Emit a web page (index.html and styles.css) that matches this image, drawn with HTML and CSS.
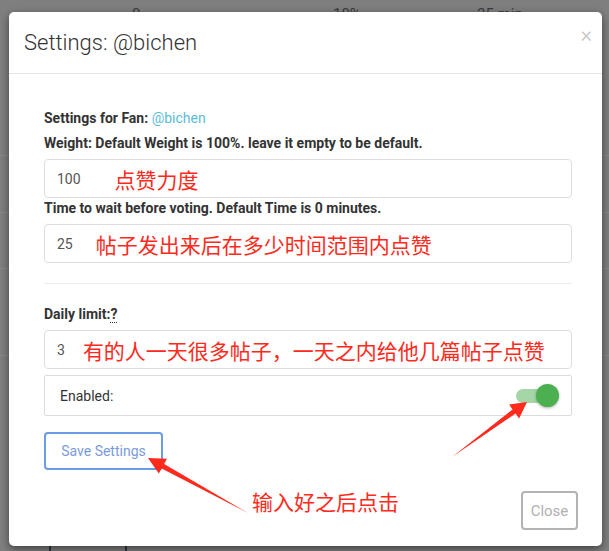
FILE: index.html
```html
<!DOCTYPE html>
<html lang="zh">
  <head>
    <meta charset="UTF-8" />
    <title>Settings: @bichen</title>
    <link rel="stylesheet" href="styles.css">
  </head>
  <body>
    <!-- page behind the dialog -->
    <div class="page">
      <div class="page-head">
        <span>0</span>
        <span>10%</span>
        <span>25 min</span>
      </div>
      <div class="page-rows">
        <div class="page-row row-a"></div>
        <div class="page-row row-b"></div>
        <div class="page-row row-c"></div>
        <div class="page-row row-last">
          <div class="page-cell cell-a"></div>
          <div class="page-cell cell-b"></div>
        </div>
      </div>
    </div>

    <div class="modal">
      <div class="modal-header">
        <h4 class="modal-title">Settings: @bichen</h4>
        <span class="close">&times;</span>
      </div>

      <div class="modal-body">
        <p class="label label-fan">Settings for Fan: <a class="fan">@bichen</a></p>
        <p class="label">Weight: Default Weight is 100%. leave it empty to be default.</p>
        <div class="field">
          <span class="value">100</span>
          <span class="note note-weight">点赞力度</span>
        </div>

        <p class="label">Time to wait before voting. Default Time is 0 minutes.</p>
        <div class="field">
          <span class="value">25</span>
          <span class="note note-time">帖子发出来后在多少时间范围内点赞</span>
        </div>

        <hr>

        <p class="label">Daily limit:<abbr>?</abbr></p>
        <div class="field">
          <span class="value">3</span>
          <span class="note note-limit">有的人一天很多帖子，一天之内给他几篇帖子点赞</span>
        </div>

        <div class="switch-row">
          <span>Enabled:</span>
          <span class="switch"><span class="knob"></span></span>
        </div>

        <button class="btn-save">Save Settings</button>
      </div>

      <div class="modal-footer">
        <span class="note note-click">输入好之后点击</span>
        <button class="btn-close">Close</button>
      </div>
    </div>

    <!-- red arrows drawn over the dialog -->
    <svg class="arrows" viewBox="0 0 609 551">
      <polygon points="452,457 515.6,413.5 519.1,418.4 527,402 509.1,404.6 512.6,409.5" />
      <polygon points="248,513 164.1,464 167,458.8 148,458 158.8,473.6 161.7,468.4" />
    </svg>
  </body>
</html>
```

FILE: styles.css
```css
* {
  margin: 0;
  padding: 0;
  box-sizing: border-box;
}

body {
  font-family: Roboto, "Noto Sans", Arial, sans-serif;
  background: #7f7f7f;
  color: #333;
  width: 609px;
  height: 551px;
  overflow: hidden;
  position: relative;
}

/* page behind the dialog */
.page-head {
  display: grid;
  grid-template-columns: 132px 201px 144px auto;
  padding-top: 4px;
  height: 30px;
  font-size: 15px;
  line-height: 20px;
  color: #3a3a3a;
}

.page-head span {
  grid-row: 1;
}

.page-head span:first-child {
  grid-column: 2;
}

.page-head span:nth-child(2) {
  grid-column: 3;
}

.page-head span:nth-child(3) {
  grid-column: 4;
}

.page-rows {
  margin-top: 125px;
}

.page-row {
  border-top: 1px solid #8b8b8b;
}

.row-a {
  height: 57px;
}

.row-b {
  height: 56px;
}

.row-c {
  height: 87px;
}

.row-last {
  display: flex;
  height: 200px;
}

.page-cell {
  border-right: 2px solid #2d3444;
}

.cell-a {
  width: 51px;
}

.cell-b {
  width: 76px;
}

/* dialog */
.modal {
  position: absolute;
  left: 9px;
  top: 12px;
  width: 593px;
  background: #fff;
  border-radius: 5px;
  box-shadow: 0 3px 9px rgba(0, 0, 0, 0.5);
}

.modal-header {
  display: flex;
  justify-content: space-between;
  align-items: flex-start;
  padding: 15px 10px 15px 15px;
  border-bottom: 1px solid #e5e5e5;
}

.modal-title {
  font-size: 22px;
  font-weight: 300;
  line-height: 31px;
  color: #333;
}

.close {
  margin-top: -2px;
  font-size: 22px;
  font-weight: 300;
  line-height: 20px;
  color: #c4c4c4;
}

.modal-body {
  padding: 34px 30px 0 35px;
}

.label {
  font-size: 14px;
  font-weight: 700;
  line-height: 20px;
  margin-bottom: 6px;
}

.label-fan {
  margin-bottom: 5px;
}

.fan {
  font-weight: 400;
  color: #5bbcd8;
}

abbr {
  text-decoration: none;
  border-bottom: 1px dotted #333;
}

.field {
  display: flex;
  align-items: center;
  height: 39px;
  padding-left: 12px;
  border: 1px solid #dedede;
  border-radius: 4px;
  font-size: 14px;
  color: #555;
}

.note {
  font-family: "Noto Sans CJK SC", sans-serif;
  font-size: 21px;
  line-height: 24px;
  color: #fe2a1c;
}

.note-weight {
  margin-left: 34px;
}

.note-time {
  margin-left: 23px;
}

.note-limit {
  margin-left: 18px;
}

hr {
  border: 0;
  border-top: 1px solid #eee;
  margin: 20px 0 20px;
}

.switch-row {
  display: flex;
  align-items: center;
  justify-content: space-between;
  margin-top: 6px;
  height: 41px;
  padding: 0 23px 0 15px;
  border: 1px solid #dcdcdc;
  border-radius: 2px;
  font-size: 14px;
  color: #333;
}

.switch {
  position: relative;
  width: 32px;
  height: 14px;
  border-radius: 7px;
  background: #a5d6a7;
}

.knob {
  position: absolute;
  left: 20px;
  top: -5px;
  width: 23px;
  height: 23px;
  border-radius: 50%;
  background: #4caf50;
  box-shadow: 0 1px 3px rgba(0, 0, 0, 0.3);
}

.btn-save {
  margin-top: 16px;
  width: 119px;
  height: 38px;
  border: 2px solid #6b9be4;
  border-radius: 4px;
  background: #fff;
  font-family: Roboto, Arial, sans-serif;
  font-size: 14px;
  color: #7b9bd8;
}

.modal-footer {
  display: flex;
  justify-content: space-between;
  align-items: flex-start;
  padding: 21px 24px 16px 0;
}

.note-click {
  margin-left: 243px;
  margin-top: -2px;
}

.btn-close {
  width: 57px;
  height: 39px;
  border: 2px solid #b3b3b3;
  border-radius: 4px;
  background: #fff;
  font-family: Roboto, Arial, sans-serif;
  font-size: 15px;
  color: #b0b0b0;
}

.arrows {
  position: absolute;
  left: 0;
  top: 0;
  width: 609px;
  height: 551px;
  pointer-events: none;
  fill: #fe2a1c;
}
```
